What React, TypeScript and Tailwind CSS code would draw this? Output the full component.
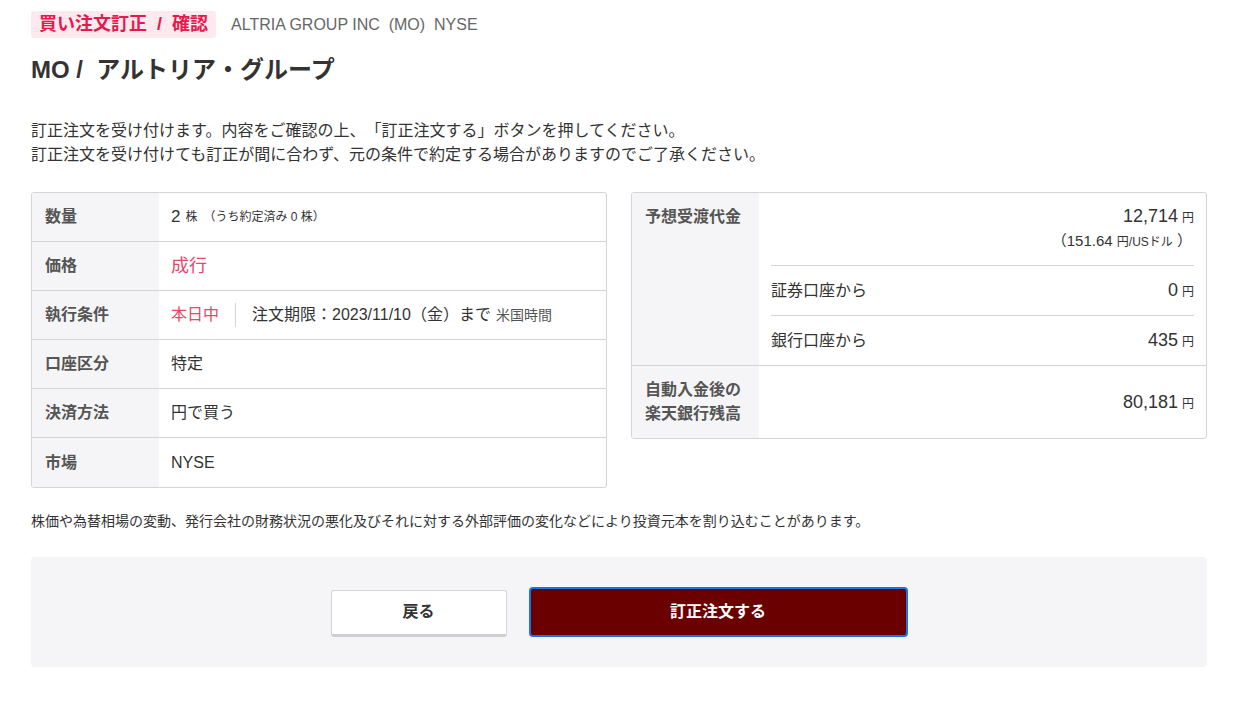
import React from "react";

const font = { fontFamily: '"Liberation Sans", "Noto Sans CJK JP", sans-serif' };

function Row({ label, children, last }: { label: string; children: React.ReactNode; last?: boolean }) {
  return (
    <div className={`flex h-[49px] ${last ? "" : "border-b border-[#d4d4d8]"}`}>
      <div className="w-[127px] shrink-0 bg-[#f5f5f7] px-[13px] flex items-center text-[16px] font-bold text-[#555]">
        {label}
      </div>
      <div className="flex-1 px-[12px] flex items-center text-[16px] text-[#333]">{children}</div>
    </div>
  );
}

function Yen({ v }: { v: string }) {
  return (
    <span className="text-[18px] text-[#333]">
      {v}
      <span className="text-[12px] ml-[4px]">円</span>
    </span>
  );
}

export default function App() {
  return (
    <div className="w-[1244px] min-h-[707px] bg-white pl-[31px] pr-[37px] pt-[11px] [text-spacing-trim:space-all]" style={font}>
      <div className="flex items-center">
        <span className="bg-[#fde9ee] text-[#e5194d] font-bold text-[18px] rounded-[3px] px-[8px] h-[27px] flex items-center">
          買い注文訂正&nbsp;&nbsp;/&nbsp;&nbsp;確認
        </span>
        <span className="ml-[15px] text-[16px] text-[#666]">ALTRIA GROUP INC&nbsp;&nbsp;(MO)&nbsp;&nbsp;NYSE</span>
      </div>
      <h1 className="mt-[16px] text-[24px] font-bold text-[#333] leading-[32px]">MO /&nbsp; アルトリア・グループ</h1>

      <div className="mt-[33px] text-[16px] text-[#333] leading-[24px]">
        <p>訂正注文を受け付けます。内容をご確認の上、「訂正注文する」ボタンを押してください。</p>
        <p>訂正注文を受け付けても訂正が間に合わず、元の条件で約定する場合がありますのでご了承ください。</p>
      </div>

      <div className="mt-[25px] flex gap-[24px] items-start">
        <div className="w-[576px] border border-[#d4d4d8] rounded-[3px] overflow-hidden">
          <Row label="数量">
            <span className="text-[17px]">2</span>
            <span className="text-[12px] ml-[5px]">株</span>
            <span className="text-[12px] ml-[6px]">（うち約定済み 0 株）</span>
          </Row>
          <Row label="価格">
            <span className="text-[#e8466a] text-[18px]">成行</span>
          </Row>
          <Row label="執行条件">
            <span className="text-[#e8466a]">本日中</span>
            <span className="mx-[16px] h-[24px] border-l border-[#d4d4d8]" />
            <span>注文期限：2023/11/10（金）まで</span>
            <span className="text-[14px] ml-[5px] text-[#555]">米国時間</span>
          </Row>
          <Row label="口座区分">特定</Row>
          <Row label="決済方法">円で買う</Row>
          <Row label="市場" last>
            NYSE
          </Row>
        </div>

        <div className="w-[576px] border border-[#d4d4d8] rounded-[3px] overflow-hidden">
          <div className="flex border-b border-[#d4d4d8]">
            <div className="w-[127px] shrink-0 bg-[#f5f5f7] px-[13px] pt-[12px] text-[16px] font-bold text-[#555]">
              予想受渡代金
            </div>
            <div className="flex-1 px-[12px]">
              <div className="h-[73px] border-b border-[#d4d4d8] flex flex-col items-end pt-[10px]">
                <Yen v="12,714" />
                <span className="text-[15px] text-[#333] pr-[2px]">
                  （151.64 <span className="text-[12px]">円/USドル</span> ）
                </span>
              </div>
              <div className="h-[50px] border-b border-[#d4d4d8] flex items-center justify-between text-[16px] text-[#333]">
                <span>証券口座から</span>
                <Yen v="0" />
              </div>
              <div className="h-[49px] flex items-center justify-between text-[16px] text-[#333]">
                <span>銀行口座から</span>
                <Yen v="435" />
              </div>
            </div>
          </div>
          <div className="flex h-[72px]">
            <div className="w-[127px] shrink-0 bg-[#f5f5f7] px-[13px] flex flex-col justify-center text-[16px] font-bold text-[#555] leading-[24px]">
              <span>自動入金後の</span>
              <span>楽天銀行残高</span>
            </div>
            <div className="flex-1 px-[12px] flex items-center justify-end">
              <Yen v="80,181" />
            </div>
          </div>
        </div>
      </div>

      <p className="mt-[23px] text-[14px] leading-[20px] text-[#333]">
        株価や為替相場の変動、発行会社の財務状況の悪化及びそれに対する外部評価の変化などにより投資元本を割り込むことがあります。
      </p>

      <div className="mt-[26px] h-[110px] bg-[#f5f5f7] rounded-[4px] flex items-center justify-center gap-[22px]">
        <button className="w-[176px] h-[47px] mt-[2px] bg-white border border-[#d4d4d8] border-b-[3px] border-b-[#cfcfd3] rounded-[3px] text-[16px] font-bold text-[#333]">
          戻る
        </button>
        <button className="w-[379px] h-[50px] bg-[#6b0000] border-2 border-[#1a73e8] rounded-[4px] text-[16px] font-bold text-white">
          訂正注文する
        </button>
      </div>
    </div>
  );
}
